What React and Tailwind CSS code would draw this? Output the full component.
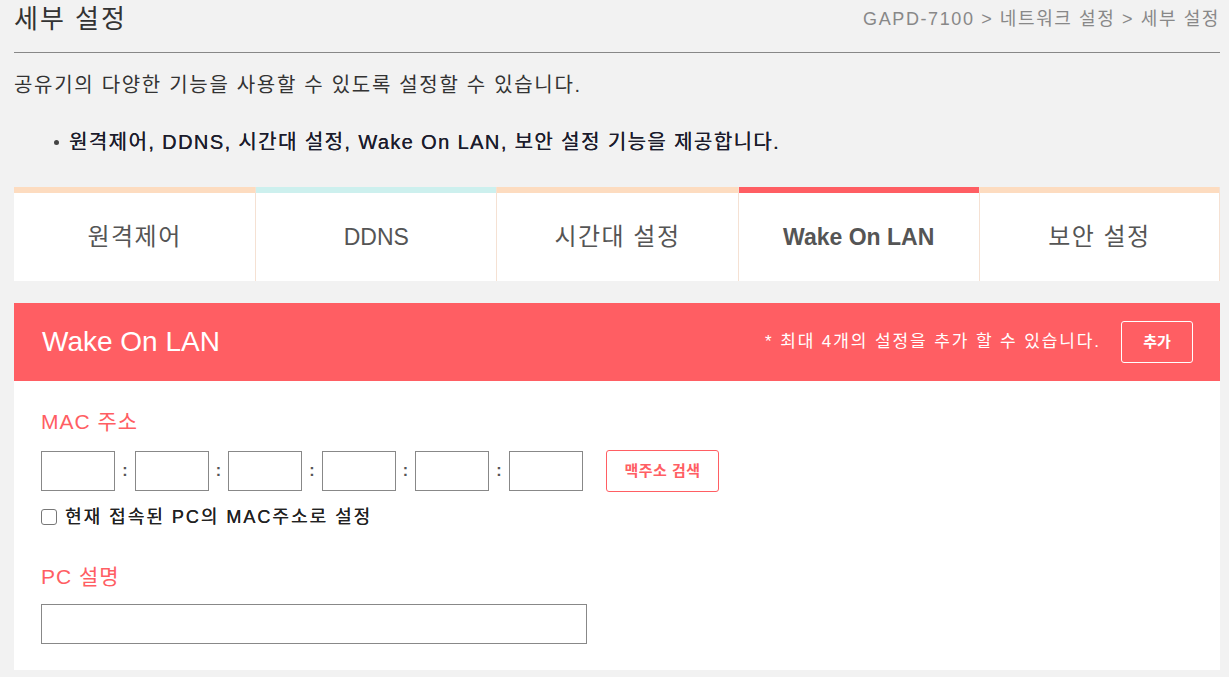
import React from "react";

const font = { fontFamily: '"Liberation Sans", "Noto Sans CJK KR", sans-serif' };

const tabs = [
  { label: "원격제어", strip: "bg-[#fddcc0]", ko: true },
  { label: "DDNS", strip: "bg-[#cdf0ee]" },
  { label: "시간대 설정", strip: "bg-[#fddcc0]", ko: true },
  { label: "Wake On LAN", strip: "bg-[#ff5e63]", active: true },
  { label: "보안 설정", strip: "bg-[#fddcc0]", ko: true },
];

function MacInput() {
  return <div className="w-[74px] h-[40px] border border-[#888] bg-white" />;
}

export default function App() {
  return (
    <div className="w-[1229px] h-[677px] bg-[#f2f2f2] overflow-hidden text-[#333]" style={font}>
      <div className="px-[14px] pr-[9px]">
        <div className="flex items-start justify-between h-[53px] border-b border-[#888] pt-[4px]">
          <div className="text-[26px] text-[#333] leading-[30px] tracking-[2px]">세부 설정</div>
          <div className="text-[18px] text-[#888] leading-[30px] tracking-[1.6px]">GAPD-7100 &gt; 네트워크 설정 &gt; 세부 설정</div>
        </div>
        <div className="mt-[20px] text-[20px] leading-[24px] text-[#333] tracking-[1.7px]">공유기의 다양한 기능을 사용할 수 있도록 설정할 수 있습니다.</div>
        <div className="mt-[32px] flex items-center pl-[40px] text-[20px] leading-[26px] text-[#1c1c2c] tracking-[1.4px] [text-shadow:0.25px_0_0_#1c1c2c]">
          <span className="w-[5px] h-[5px] rounded-full bg-[#444] mr-[10px]" />
          원격제어, DDNS, 시간대 설정, Wake On LAN, 보안 설정 기능을 제공합니다.
        </div>

        <div className="mt-[32px] grid grid-cols-5 bg-white">
          {tabs.map((t, i) => (
            <div key={i} className={`flex flex-col ${i > 0 ? "border-l border-[#f5e1d3]" : ""} ${i === 4 ? "border-r border-[#f5e1d3]" : ""}`}>
              <div className={`h-[6px] ${t.strip}`} />
              <div className={`h-[88px] flex items-center justify-center text-[#555] ${t.ko ? "text-[24px] tracking-[1.5px]" : "text-[23px]"} ${t.active ? "font-bold" : ""}`}>
                {t.label}
              </div>
            </div>
          ))}
        </div>

        <div className="mt-[22px] bg-[#ff5e63] h-[78px] flex items-center justify-between pl-[28px] pr-[27px]">
          <div className="text-[28px] text-white">Wake On LAN</div>
          <div className="flex items-center gap-[20px]">
            <span className="text-[17px] text-white tracking-[1.9px]">* 최대 4개의 설정을 추가 할 수 있습니다.</span>
            <button className="w-[72px] h-[42px] border border-white rounded-[3px] text-white text-[15px] font-bold">추가</button>
          </div>
        </div>

        <div className="bg-white h-[289px] pl-[27px] pt-[27px]">
          <div className="text-[21px] text-[#ff5e63] leading-[28px] tracking-[1px]">MAC 주소</div>
          <div className="mt-[14px] flex items-center">
            <MacInput />
            <span className="w-[20px] text-center text-[16px] font-bold text-[#555]">:</span>
            <MacInput />
            <span className="w-[19px] text-center text-[16px] font-bold text-[#555]">:</span>
            <MacInput />
            <span className="w-[20px] text-center text-[16px] font-bold text-[#555]">:</span>
            <MacInput />
            <span className="w-[19px] text-center text-[16px] font-bold text-[#555]">:</span>
            <MacInput />
            <span className="w-[20px] text-center text-[16px] font-bold text-[#555]">:</span>
            <MacInput />
            <button className="ml-[23px] w-[113px] h-[42px] border border-[#ff5e63] rounded-[3px] text-[#ff5e63] text-[15px] font-bold tracking-[0.5px]">맥주소 검색</button>
          </div>
          <label className="mt-[14px] flex items-center gap-[8px] text-[18px] leading-[22px] text-[#222] tracking-[2px] [text-shadow:0.25px_0_0_#222]">
            <span className="w-[16px] h-[16px] border border-[#777] rounded-[3px] bg-white" />
            현재 접속된 PC의 MAC주소로 설정
          </label>
          <div className="mt-[35px] text-[21px] text-[#ff5e63] leading-[28px] tracking-[1px]">PC 설명</div>
          <div className="mt-[13px] w-[546px] h-[40px] border border-[#888]" />
        </div>
      </div>
    </div>
  );
}
